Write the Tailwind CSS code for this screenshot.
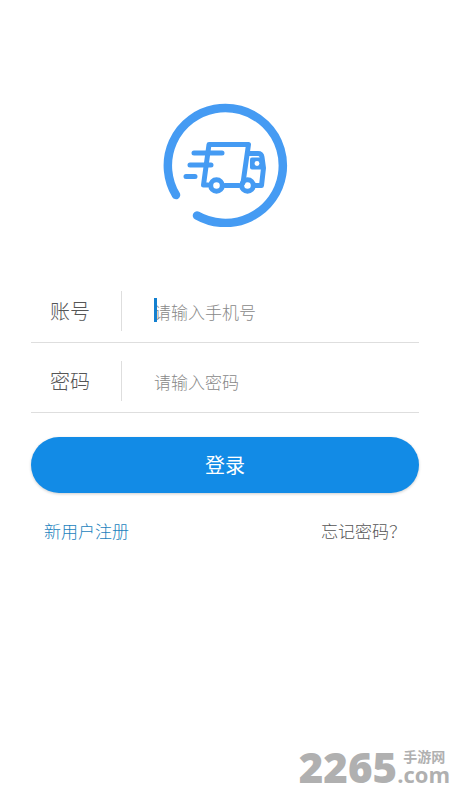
<!DOCTYPE html>
<html lang="zh-CN">
<head>
<meta charset="UTF-8">
<meta name="viewport" content="width=device-width, initial-scale=1">
<title>登录</title>
<script src="https://cdn.jsdelivr.net/npm/@tailwindcss/browser@4"></script>
</head>
<body class="relative min-h-screen overflow-x-hidden bg-white font-['Noto_Sans_CJK_SC',sans-serif]">
<main class="flex flex-col px-[31px] pt-[101px]">
  <svg class="size-[126px] self-center" viewBox="0 0 126 126" fill="none" stroke="#459bf3" stroke-linecap="round" stroke-linejoin="round" role="img" aria-label="货运">
    <path d="M14 94A57.500 57.500 0 1 1 35 114.500" stroke-width="8.500"/>
    <g stroke-width="5">
      <path d="M46 84H41.500L47 43.500H86.500L81 82"/>
      <path d="M63 84.500H77"/>
      <path d="M86 52.500H96Q99.500 52.500 100 56L101.500 67L99.500 84.500H93"/>
      <path d="M32 52H60M28 64H49M24 75.500H33"/>
      <circle cx="54.500" cy="84.500" r="5.800"/>
      <circle cx="85.500" cy="84.500" r="5.800"/>
    </g>
    <rect x="88" y="56.500" width="13.500" height="12" rx="2" fill="#459bf3" stroke="none"/>
    <circle cx="95" cy="62.500" r="2.400" fill="white" stroke="none"/>
  </svg>
  <form class="mt-[46px] flex flex-col">
    <div class="flex items-center border-b border-[#dedede] pt-[18px] pb-[11px]">
      <label for="account" class="w-[90px] shrink-0 pl-[19px] text-[20px] leading-[40px] font-light text-[#555]">账号</label>
      <div class="relative h-[40px] min-w-0 flex-1 border-l border-[#dedede] pl-[32px]">
        <input id="account" type="tel" placeholder="请输入手机号" class="h-full w-full text-[17px] font-light text-[#555] outline-none placeholder:text-[#888]">
        <span class="absolute top-[7px] left-[32px] h-[24px] w-[3px] bg-[#1380d0]"></span>
      </div>
    </div>
    <div class="flex items-center border-b border-[#dedede] pt-[18px] pb-[11px]">
      <label for="password" class="w-[90px] shrink-0 pl-[19px] text-[20px] leading-[40px] font-light text-[#555]">密码</label>
      <div class="h-[40px] min-w-0 flex-1 border-l border-[#dedede] pl-[32px]">
        <input id="password" type="password" placeholder="请输入密码" class="h-full w-full text-[17px] font-light text-[#555] outline-none placeholder:text-[#888]">
      </div>
    </div>
    <button type="submit" class="mt-6 h-14 rounded-full bg-[#128be6] text-[20px] text-white shadow-[0_1px_3px_rgba(0,0,0,0.2)]">登录</button>
  </form>
  <nav class="mt-[26px] flex justify-between px-[13px] text-[17px] leading-6">
    <a href="#register" class="font-light text-[#1a7fbd]">新用户注册</a>
    <a href="#forgot" class="font-light text-[#555]">忘记密码？</a>
  </nav>
</main>
<div class="absolute right-0 bottom-[14px] flex items-end font-bold text-[#b0b0b0]">
  <span class="font-['Open_Sans',sans-serif] text-[42px] leading-[38px] font-extrabold">2265</span>
  <span class="flex flex-col pb-[2px]">
    <span class="pl-[6px] text-[14px] leading-4">手游网</span>
    <span class="font-['Open_Sans',sans-serif] text-[22px] leading-5">.com</span>
  </span>
</div>
</body>
</html>
